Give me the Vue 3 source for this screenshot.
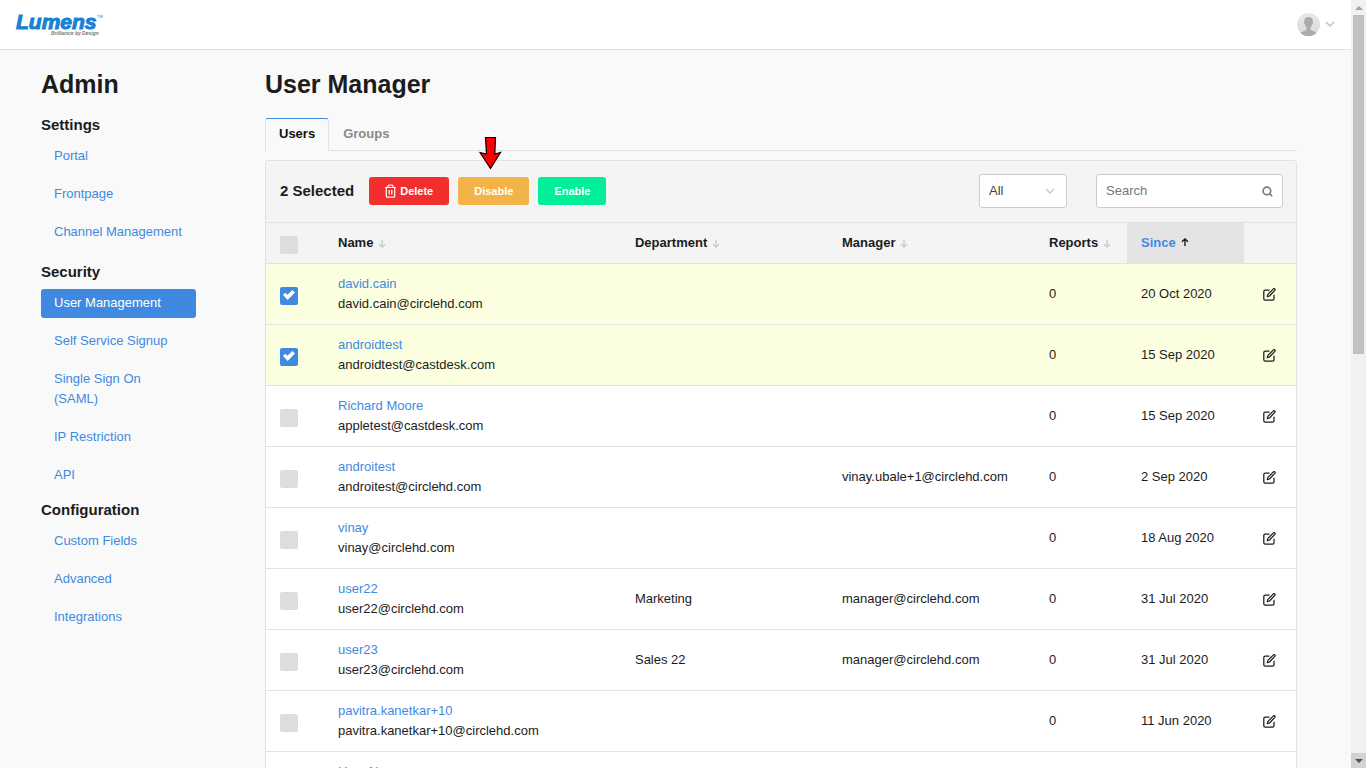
<script setup>
import { ref, computed } from 'vue'

const sections = [
  { title: 'Settings', links: ['Portal', 'Frontpage', 'Channel Management'] },
  { title: 'Security', links: ['User Management', 'Self Service Signup', 'Single Sign On (SAML)', 'IP Restriction', 'API'] },
  { title: 'Configuration', links: ['Custom Fields', 'Advanced', 'Integrations'] }
]

const columns = [
  { key: 'name', label: 'Name' },
  { key: 'department', label: 'Department' },
  { key: 'manager', label: 'Manager' },
  { key: 'reports', label: 'Reports' },
  { key: 'since', label: 'Since' }
]

const users = ref([
  { name: 'david.cain', email: 'david.cain@circlehd.com', department: '', manager: '', reports: 0, since: '20 Oct 2020', selected: true },
  { name: 'androidtest', email: 'androidtest@castdesk.com', department: '', manager: '', reports: 0, since: '15 Sep 2020', selected: true },
  { name: 'Richard Moore', email: 'appletest@castdesk.com', department: '', manager: '', reports: 0, since: '15 Sep 2020', selected: false },
  { name: 'androitest', email: 'androitest@circlehd.com', department: '', manager: 'vinay.ubale+1@circlehd.com', reports: 0, since: '2 Sep 2020', selected: false },
  { name: 'vinay', email: 'vinay@circlehd.com', department: '', manager: '', reports: 0, since: '18 Aug 2020', selected: false },
  { name: 'user22', email: 'user22@circlehd.com', department: 'Marketing', manager: 'manager@circlehd.com', reports: 0, since: '31 Jul 2020', selected: false },
  { name: 'user23', email: 'user23@circlehd.com', department: 'Sales 22', manager: 'manager@circlehd.com', reports: 0, since: '31 Jul 2020', selected: false },
  { name: 'pavitra.kanetkar+10', email: 'pavitra.kanetkar+10@circlehd.com', department: '', manager: '', reports: 0, since: '11 Jun 2020', selected: false },
  { name: 'User Name', email: '', department: '', manager: '', reports: '', since: '', selected: false }
])

const selectedCount = computed(() => users.value.filter(u => u.selected).length)
</script>

<template>
  <div class="window">
    <div class="page">
      <header class="topbar">
        <a href="#" class="logo" aria-label="Lumens">
          <svg width="90" height="26" viewBox="0 0 90 26">
            <text x="1" y="16" class="logo-name">Lumens</text>
            <text x="36" y="22" class="logo-tag">Brilliance by Design</text>
            <text x="82" y="5" class="logo-tm">TM</text>
          </svg>
        </a>
        <button class="account" aria-label="Account">
          <svg width="23" height="23" viewBox="0 0 23 23">
            <defs>
              <linearGradient id="avatarBg" x1="0" y1="0" x2="0" y2="1">
                <stop offset="0" stop-color="#e8e8e8" /><stop offset="1" stop-color="#dadada" />
              </linearGradient>
              <clipPath id="avatarClip"><circle cx="11.5" cy="11.5" r="11.5" /></clipPath>
            </defs>
            <g clip-path="url(#avatarClip)">
              <rect width="23" height="23" fill="url(#avatarBg)" />
              <path d="M11.5 4C8.600 4 7 5.800 7.200 8.800c-.6.2-.2 2.200.6 2.500.3 1.500.9 2.400 1.700 3.100v2.400c-1 1.400-5 1.300-6 3.700V23h16v-2.500c-1-2.400-5-2.300-6-3.700v-2.400c.8-.7 1.400-1.600 1.700-3.100.8-.3 1.200-2.300.6-2.500C16 5.800 14.400 4 11.500 4z" fill="#aaa" />
            </g>
          </svg>
          <svg width="10" height="7" viewBox="0 0 10 7" fill="none" stroke="#c0c0c0" stroke-width="1.500"><path d="M1 1l4 4 4-4" /></svg>
        </button>
      </header>

      <div class="content">
        <aside>
          <h1>Admin</h1>
          <nav v-for="s in sections" :key="s.title" :aria-label="s.title" class="group">
            <h2>{{ s.title }}</h2>
            <a v-for="l in s.links" :key="l" href="#" :class="{ active: l === 'User Management' }">{{ l }}</a>
          </nav>
        </aside>

        <main>
          <h1>User Manager</h1>
          <div class="tabs">
            <button class="tab current">Users</button>
            <button class="tab">Groups</button>
          </div>

          <section class="panel">
            <div class="toolbar">
              <strong class="count">{{ selectedCount }} Selected</strong>
              <button class="btn delete">
                <svg width="11" height="14" viewBox="0 0 11 14" fill="none" stroke="#fff" stroke-width="1.200">
                  <path d="M0 3.500h11M3 3.200V2.100q0-1 1-1h3q1 0 1 1v1.100M1.300 3.500v8.400q0 1.300 1.300 1.300h5.800q1.300 0 1.300-1.300V3.500M4.200 6v4.500M6.800 6v4.500" />
                </svg>
                Delete
              </button>
              <div class="pointed">
                <button class="btn disable">Disable</button>
                <svg class="arrow" width="23" height="34" viewBox="0 0 23 34"><path d="M6.500 1.500h10L15.800 18l5.700-1.500L11.500 32.500 1 16.500l6.500 1.500z" fill="#f00" stroke="#000" stroke-width="1.200" /></svg>
              </div>
              <button class="btn enable">Enable</button>
              <div class="field filter">
                <select aria-label="Filter"><option>All</option></select>
                <svg width="10" height="7" viewBox="0 0 10 7" fill="none" stroke="#c4c4c4" stroke-width="1.300"><path d="M1 1l4 4 4-4" /></svg>
              </div>
              <div class="field search">
                <input type="text" placeholder="Search" aria-label="Search" />
                <svg width="11" height="11" viewBox="0 0 11 11" fill="none" stroke="#777" stroke-width="1.600"><circle cx="4.900" cy="4.900" r="3.800" /><path d="M7.500 7.500l2.700 2.700" /></svg>
              </div>
            </div>

            <table>
              <colgroup>
                <col class="c-check" /><col /><col class="c-wide" /><col class="c-wide" /><col class="c-reports" /><col class="c-since" /><col class="c-edit" />
              </colgroup>
              <thead>
                <tr>
                  <th><input type="checkbox" aria-label="Select all" /></th>
                  <th v-for="c in columns" :key="c.key" :class="{ sorted: c.key === 'since' }">
                    <button class="sort">
                      {{ c.label }}
                      <svg v-if="c.key === 'since'" class="up" width="8" height="8" viewBox="0 0 8 8" fill="none" stroke="#1b1c1d" stroke-width="1.400"><path d="M4 8V1M1 3.700L4 .9l3 2.800" /></svg>
                      <svg v-else class="down" width="8" height="8" viewBox="0 0 8 8" fill="none" stroke="#cbcbcb" stroke-width="1.400"><path d="M4 0v7M1 4.300l3 2.800 3-2.800" /></svg>
                    </button>
                  </th>
                  <th></th>
                </tr>
              </thead>
              <tbody>
                <tr v-for="u in users" :key="u.name" :class="{ selected: u.selected }">
                  <td><input v-model="u.selected" type="checkbox" :aria-label="'Select ' + u.name" /></td>
                  <td><a href="#">{{ u.name }}</a><div class="email">{{ u.email }}</div></td>
                  <td>{{ u.department }}</td>
                  <td>{{ u.manager }}</td>
                  <td>{{ u.reports }}</td>
                  <td>{{ u.since }}</td>
                  <td class="edit-cell">
                    <button class="edit" :aria-label="'Edit ' + u.name">
                      <svg width="13" height="13" viewBox="0 0 13 13" fill="none" stroke="#1b1c1d" stroke-width="1.250" stroke-linejoin="round">
                        <path d="M6.500 2H2.200Q.8 2 .8 3.400v7.400q0 1.400 1.400 1.400h7.400q1.400 0 1.400-1.400V6.800" />
                        <path d="M4.300 8.700l.6-2.300L10.400.9q.7-.6 1.400 0t0 1.500L6.500 8z" />
                      </svg>
                    </button>
                  </td>
                </tr>
              </tbody>
            </table>
          </section>
        </main>
      </div>
    </div>

    <div class="scrollbar" aria-hidden="true">
      <div class="step"><svg width="8" height="4" viewBox="0 0 8 4"><path d="M0 4l4-4 4 4z" fill="#a3a3a3" /></svg></div>
      <div class="track"><div class="thumb"></div></div>
      <div class="step pressed"><svg width="8" height="4" viewBox="0 0 8 4"><path d="M0 0l4 4 4-4z" fill="#505050" /></svg></div>
    </div>
  </div>
</template>

<style>
body { margin: 0; }
</style>

<style scoped>
.window {
  display: flex;
  height: 100vh;
  overflow: hidden;
  background: #f9f9f9;
  color: #1b1c1d;
  font: 13px/20px "Liberation Sans", Arial, sans-serif;
}
.window * { box-sizing: border-box; }
.page { flex: 1; min-width: 0; overflow: hidden; }
button { padding: 0; border: 0; background: none; color: inherit; font: inherit; cursor: pointer; }
svg { display: block; flex: none; }
a { color: #3f8ae0; text-decoration: none; }

.topbar {
  display: flex;
  justify-content: space-between;
  align-items: center;
  height: 50px;
  padding: 0 16px 0 15px;
  background: #fff;
  border-bottom: 1px solid #e2e2e2;
}
.logo { padding-top: 2px; }
.logo svg { overflow: visible; }
.logo-name {
  font: italic bold 21px "Liberation Sans", Arial, sans-serif;
  fill: #1781d3;
  stroke: #1781d3;
  stroke-width: 1px;
}
.logo-tag { font: italic bold 5px "Liberation Sans", Arial, sans-serif; fill: #777; }
.logo-tm { font: 4px "Liberation Sans", Arial, sans-serif; fill: #1781d3; }
.account { display: flex; align-items: center; gap: 5px; }

.content {
  display: grid;
  grid-template-columns: 155px minmax(0, 1fr);
  gap: 69px;
  padding: 18px 54px 0 41px;
}
h1 { margin: 0; font-size: 25px; line-height: 32px; }
.group { padding-top: 15px; }
.group:last-child { padding-top: 10px; }
.group h2 { margin: 0 0 7px; font-size: 15px; line-height: 20px; }
.group a {
  display: block;
  margin-bottom: 9px;
  padding: 4px 12px 5px 13px;
  border-radius: 3px;
}
.group a:last-child { margin-bottom: 0; }
.group a.active { background: #3f8ae0; color: #fff; }

.tabs { display: flex; height: 33px; margin: 18px 0 9px; border-bottom: 1px solid #e2e2e2; }
.tab { height: 32px; padding: 0 14px; color: #8a8a8a; font-weight: bold; }
.tab.current {
  height: 33px;
  padding: 0 13px 2px;
  background: #f9f9f9;
  border: 1px solid #e2e2e2;
  border-top-color: #3f8ae0;
  border-bottom: 0;
  border-radius: 3px 3px 0 0;
  color: #111;
}

.panel { border: 1px solid #e2e2e2; border-radius: 3px; background: #fff; }
.toolbar {
  display: flex;
  align-items: center;
  gap: 9px;
  height: 62px;
  padding: 0 13px 2px 14px;
  background: #f4f4f4;
  border-bottom: 1px solid #e2e2e2;
}
.count { margin-right: 6px; font-size: 15px; }
.btn {
  display: flex;
  align-items: center;
  gap: 4px;
  height: 28px;
  padding: 0 16px;
  border-radius: 3px;
  color: #fff;
  font-size: 11px;
  font-weight: bold;
}
.delete { background: #f22e2e; }
.disable { background: #f2b348; }
.enable { background: #00ef98; }
.pointed { position: relative; }
.arrow { position: absolute; left: 21px; top: -41px; }

.field { position: relative; height: 34px; }
.field select, .field input {
  width: 100%;
  height: 100%;
  padding: 0 9px;
  border: 1px solid #ccc;
  border-radius: 3px;
  background: #fff;
  color: #444;
  font: inherit;
  appearance: none;
}
.field input::placeholder { color: #777; opacity: 1; }
.field svg { position: absolute; right: 12px; top: 14px; pointer-events: none; }
.field.search svg { right: 10px; top: 12px; }
.filter { width: 88px; margin-left: auto; }
.search { width: 187px; margin-left: 20px; }

table { width: 100%; table-layout: fixed; border-collapse: separate; border-spacing: 0; }
.c-check { width: 58px; }
.c-wide { width: 20.1%; }
.c-reports { width: 92px; }
.c-since { width: 117px; }
.c-edit { width: 52px; }
th, td { padding: 0 0 0 14px; text-align: left; vertical-align: middle; border-bottom: 1px solid #e2e2e2; }
th { height: 41px; background: #f4f4f4; }
td { height: 61px; }
.selected td { background: #fbffdf; }
th.sorted { background: #e4e4e4; color: #3f8ae0; }
.sort { display: flex; align-items: center; gap: 5px; font-weight: bold; }
.down { margin-top: 2px; }
.up { margin-bottom: 2px; }
.email { min-height: 20px; }

input[type="checkbox"] {
  display: block;
  width: 18px;
  height: 18px;
  margin: 4px 0 0;
  appearance: none;
  border-radius: 2px;
  background: #ddd;
}
input[type="checkbox"]:checked { background: #3f8ae0; }
input[type="checkbox"]:checked::before {
  content: "";
  display: block;
  width: 12px;
  height: 10px;
  margin: 3px 0 0 3px;
  background: #fff;
  clip-path: polygon(0 50%, 18% 28%, 37% 48%, 78% 0, 100% 24%, 39% 100%);
}
.edit { display: block; }
.edit-cell { padding-left: 19px; }

.scrollbar { display: flex; flex-direction: column; width: 15px; background: #f1f1f1; }
.step { display: flex; align-items: center; justify-content: center; height: 15px; }
.step.pressed { background: #d2d2d2; }
.track { flex: 1; padding: 0 2px; }
.thumb { height: 46%; background: #c1c1c1; }
</style>
